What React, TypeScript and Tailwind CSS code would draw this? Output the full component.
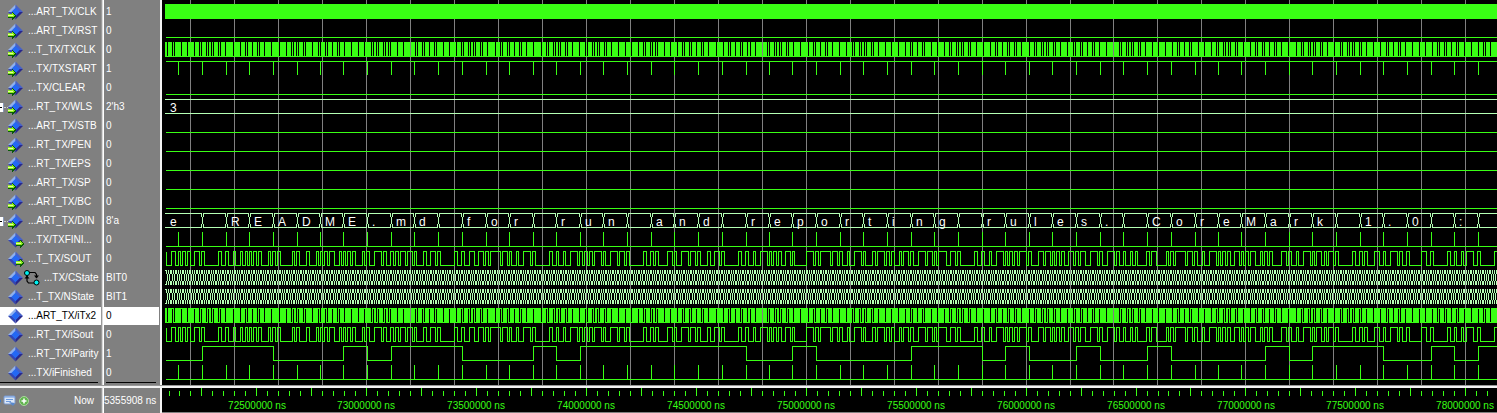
import React from "react";

type Kind = "in" | "out" | "internal";
interface Signal {
  name: string;
  value: string;
  kind: Kind;
  bus?: boolean;
  fsm?: boolean;
  selected?: boolean;
}

const signals: Signal[] = [
  { name: "...ART_TX/CLK", value: "1", kind: "in" },
  { name: "...ART_TX/RST", value: "0", kind: "in" },
  { name: "...T_TX/TXCLK", value: "0", kind: "in" },
  { name: "...TX/TXSTART", value: "1", kind: "in" },
  { name: "...TX/CLEAR", value: "0", kind: "in" },
  { name: "...RT_TX/WLS", value: "2'h3", kind: "in", bus: true },
  { name: "...ART_TX/STB", value: "0", kind: "in" },
  { name: "...RT_TX/PEN", value: "0", kind: "in" },
  { name: "...RT_TX/EPS", value: "0", kind: "in" },
  { name: "...ART_TX/SP", value: "0", kind: "in" },
  { name: "...ART_TX/BC", value: "0", kind: "in" },
  { name: "...ART_TX/DIN", value: "8'a", kind: "in", bus: true },
  { name: "...TX/TXFINI...", value: "0", kind: "out" },
  { name: "...T_TX/SOUT", value: "0", kind: "out" },
  { name: "...TX/CState", value: "BIT0", kind: "internal", fsm: true },
  { name: "...T_TX/NState", value: "BIT1", kind: "internal" },
  { name: "...ART_TX/iTx2", value: "0", kind: "internal", selected: true },
  { name: "...RT_TX/iSout", value: "0", kind: "internal" },
  { name: "...RT_TX/iParity", value: "1", kind: "internal" },
  { name: "...TX/iFinished", value: "0", kind: "internal" },
];

/* ---- waveform model: x is measured from the left edge of the wave pane ---- */
const ORIGIN = 162;
const END = 1497 - ORIGIN;
const START = 166 - ORIGIN;
const GREEN = "#39ff14";
const PALE = "#b4ffb4";
const BIT = 23.636 / 10;

// start of every transmitted frame
const marks = [
  178, 202, 226, 249, 273, 297, 320, 343, 367, 391, 414, 438, 462, 486, 509, 533, 556, 580, 603, 627, 651, 674, 698,
  722, 746, 769, 792, 816, 840, 863, 887, 911, 934, 958, 982, 1005, 1029, 1052, 1076, 1100, 1123, 1147, 1171, 1195,
  1218, 1241, 1265, 1289, 1312, 1336, 1360, 1383, 1407, 1431, 1454, 1478,
].map((x) => x - ORIGIN);

const chars = "e README.md for run and reporting rules.\nCoreMark 1.0 : ".split("");

// distances between the idle slots of the transmit clock
const idleSteps =
  "527675252325258752552578752325276252552577672325232767525255276752523252" +
  "58525255257852523252576252325257767525232767525255258752552535" +
  "752523252578525525" +
  "7762523252576775255276752523252677525525258525232525762525525776252325257" +
  "6775255276752523252675252552578525232525762523252577625525776752525526775" +
  "25";
const idle: number[] = [];
{
  let x = 167 - ORIGIN;
  idle.push(x);
  for (const d of idleSteps) {
    x += Number(d);
    if (x < END) idle.push(x);
  }
}

const top = (row: number) => 4 + 19 * row;
const low = (row: number) => 18 + 19 * row;

function flat(row: number, high = false) {
  return `M${START} ${(high ? top(row) : low(row)) + 0.5}H${END}`;
}

function pulses(row: number, down = false) {
  return flat(row, down) + marks.map((x) => `M${x + 0.5} ${top(row)}V${low(row) + (down ? 0 : 1)}`).join("");
}

function serial(row: number) {
  const hi = top(row) + 0.5;
  const lo = low(row) + 0.5;
  let level = 1;
  let d = `M${START + 0.5} ${hi}`;
  const go = (x: number, v: number) => {
    if (v === level || x < START) return;
    d += `H${Math.floor(x) + 0.5}V${v ? hi : lo}`;
    level = v;
  };
  const frame = (x0: number, ch: string) => {
    const code = ch.charCodeAt(0);
    go(x0 + BIT, 0);
    for (let b = 0; b < 8; b++) go(x0 + BIT * (b + 2), (code >> b) & 1);
    go(x0 + BIT * 10, 1);
  };
  go(START + 0.1, 0);
  frame(marks[0] - 23.4, "e");
  marks.forEach((x, i) => frame(x + 0.2, chars[i]));
  return d + `H${END}`;
}

function parity(row: number) {
  let d = `M${START} ${low(row) + 0.5}`;
  marks.forEach((x, i) => {
    let bits = 0;
    for (let c = chars[i].charCodeAt(0); c; c >>= 1) bits += c & 1;
    if (i > 0) d += `H${x + 0.5}V${(bits % 2 ? top(row) : low(row)) + 0.5}`;
  });
  return d + `H${END}`;
}

function busPath(row: number, edges: number[]) {
  const t = top(row);
  const b = low(row);
  let d = "";
  let x0 = START - 1;
  for (const e of [...edges, END + 2]) {
    d += `M${x0} ${t + 0.5}H${e}M${x0} ${b + 0.5}H${e}`;
    d += `M${e - 0.5} ${t}v4M${e + 1.5} ${t}v4M${e + 0.5} ${t + 4}v7M${e - 0.5} ${b - 3}v4M${e + 1.5} ${b - 3}v4`;
    x0 = e + 1;
  }
  return d;
}

function dense(row: number, alternate: boolean) {
  let d = "";
  let x0 = START - 1;
  [...idle, END].forEach((g, i) => {
    d += `M${x0} ${top(row)}H${g}v15H${x0}z`;
    d += `M${g} ${alternate && i % 2 ? top(row) : low(row)}h1v1h-1z`;
    x0 = g + 1;
  });
  return d;
}

const stateEdges: number[] = [];
for (let x = START + 1.6; x < END; x += BIT) stateEdges.push(Math.floor(x));

const gridPath = Array.from({ length: 30 }, (_, k) => `M${Math.floor(190.9 + 43.955 * k) - ORIGIN + 0.5} 0V385`).join("");

const lines =
  [1, 4, 6, 7, 8, 9, 10].map((r) => flat(r)).join("") +
  pulses(3, true) +
  pulses(12) +
  serial(13) +
  serial(17) +
  parity(18) +
  pulses(19);

const buses = `M${START - 1} ${top(5) + 0.5}H${END}M${START - 1} ${low(5) + 0.5}H${END}` + busPath(11, marks.slice(1));
const states = busPath(14, stateEdges) + busPath(15, stateEdges);

const ticks = Array.from({ length: 121 }, (_, k) => {
  const x = Math.floor(169 + 10.989 * k) - ORIGIN;
  return `M${x + 0.5} ${k % 5 === 3 ? 0 : 3}V8`;
}).join("");

function Waves() {
  return (
    <svg className="block h-[385px] w-full bg-black" shapeRendering="crispEdges" role="img" aria-label="Waveforms">
      <path d={gridPath} stroke="#808080" fill="none" />
      <rect x={START - 1} y={4} width={END} height={15} fill={GREEN} />
      <path d={dense(2, false) + dense(16, true)} fill={GREEN} />
      <path d={lines} stroke={GREEN} fill="none" />
      <path d={buses} stroke={PALE} fill="none" />
      <path d={states} stroke={PALE} fill="none" />
      <g fill="#fff" fontSize="12">
        <text x={START + 4} y={112}>3</text>
        <text x={START + 4} y={226}>e</text>
        {marks.map((x, i) =>
          i > 0 && chars[i].trim() ? (
            <text key={x} x={x + 5} y={226}>
              {chars[i]}
            </text>
          ) : null,
        )}
      </g>
    </svg>
  );
}

function Ruler() {
  return (
    <svg className="block h-[24px] w-full bg-black" role="img" aria-label="Time scale">
      <path d={ticks} stroke={GREEN} fill="none" shapeRendering="crispEdges" />
      <g fill={GREEN} fontSize="10" textAnchor="middle">
        {Array.from({ length: 12 }, (_, k) => (
          <text key={k} x={Math.round(256.5 + 109.89 * k) - ORIGIN} y={21}>
            {72500000 + 500000 * k} ns
          </text>
        ))}
      </g>
    </svg>
  );
}

function SignalIcon({ kind }: { kind: Kind }) {
  return (
    <svg className="block size-4 shrink-0" viewBox="0 0 16 16" aria-hidden="true">
      <path d="M7.5 0.5 0 8 4 8 7.5 4.5z" fill="#8fb0ee" />
      <path d="M7.5 0.5 15 8 11 8 7.5 4.5z" fill="#4660c8" />
      <path d="M0 8 7.5 15.5 7.5 11.5 4 8z" fill="#3446b4" />
      <path d="M15 8 7.5 15.5 7.5 11.5 11 8z" fill="#28288c" />
      <path d="M7.5 3.8 11.700 8 7.5 12.2 3.300 8z" fill="#2468f4" />
      {kind !== "internal" && (
        <g transform={kind === "in" ? "translate(0 8)" : "translate(8 8)"} shapeRendering="crispEdges">
          <path d="M0 2h4V0h1v1h1v1h1v1h1v2H7v1H6v1H5v1H4V6H0z" fill="#0a5a08" />
          <path d="M0 2h4V1h1v1h1v1h1v1H6v1H0z" fill="#8df01c" />
          <path d="M0 3h5v1H0z" fill="#eaff9a" />
        </g>
      )}
    </svg>
  );
}

function FsmIcon() {
  return (
    <svg className="block size-4 shrink-0" viewBox="0 0 16 16" aria-hidden="true">
      <path d="M5 2.5h6l1.5 2V8M3 5v6l1.5 2H10" fill="none" stroke="#000" strokeWidth="1.2" />
      <path d="M10 5.5h5L12.5 8.5zM.5 8.5h5L3 5.5z" fill="#000" />
      <circle cx="3" cy="3" r="2.5" fill="#00f0f0" stroke="#000" />
      <circle cx="12.5" cy="12.5" r="2.5" fill="#00f0f0" stroke="#000" />
    </svg>
  );
}

function Separator() {
  return <td className="border-r border-l border-l-[#999] border-r-white bg-[#d8d8d8] p-0" />;
}

export default function App() {
  return (
    <main className="flex flex-col bg-[#808080] font-['Liberation_Sans',Arial,sans-serif] text-[10px] leading-[18px] text-white">
      <div className="flex">
        <table className="w-[160px] shrink-0 table-fixed border-separate border-spacing-0 whitespace-nowrap">
          <colgroup>
            <col className="w-[101px]" />
            <col className="w-[3px]" />
            <col className="w-[56px]" />
          </colgroup>
          <tbody>
            <tr className="h-[3px]">
              <td className="p-0" />
              <Separator />
              <td className="p-0" />
            </tr>
            {signals.map((s, i) => (
              <tr key={s.name} className={i === signals.length - 1 ? "h-[18px]" : "h-[19px]"}>
                <td className="p-0 align-top">
                  <div className={"flex h-[18px] items-center " + (s.selected ? "bg-white text-black" : "")}>
                    <span className="flex w-[8px] shrink-0 items-center">
                      {s.bus && (
                        <button
                          aria-label={"Expand " + s.name}
                          className="flex h-[9px] w-[4px] items-center border-r border-[#8898b8] bg-white"
                        >
                          <span className="h-px w-[2px] bg-black" />
                        </button>
                      )}
                      {s.bus && <span className="h-px flex-1 border-t border-dotted border-[#ccc]" />}
                    </span>
                    <SignalIcon kind={s.kind} />
                    {s.fsm && <FsmIcon />}
                    <span className="ml-[4px]">{s.name}</span>
                  </div>
                </td>
                <Separator />
                <td className="p-0 align-top">
                  <div className={"mr-px h-[18px] pl-[2px] " + (s.selected ? "bg-white text-black" : "")}>{s.value}</div>
                </td>
              </tr>
            ))}
            <tr className="h-px">
              <td className="p-0 pr-[3px]">
                <div className="h-px bg-black" />
              </td>
              <Separator />
              <td className="p-0 pr-1 pl-[2px]">
                <div className="h-px bg-black" />
              </td>
            </tr>
            <tr className="h-[2px]">
              <td className="p-0" />
              <Separator />
              <td className="p-0" />
            </tr>
          </tbody>
        </table>
        <div className="w-[2px] shrink-0 bg-[#f4f4f4]" />
        <div className="min-w-0 flex-1 overflow-hidden">
          <Waves />
        </div>
      </div>

      <div className="h-[3px] border-t border-[#999] bg-[#f4f4f4]" />

      <div className="flex">
        <div className="flex w-[101px] shrink-0 items-center pr-[7px]">
          <svg className="block h-[14px] w-[30px]" viewBox="0 0 30 14" aria-hidden="true">
            <path d="M0 5l1 2-1 2z" fill="#2a78d8" />
            <rect x="4" y="2" width="11" height="8" rx="1" fill="#dce8f8" stroke="#7898cc" />
            <path d="M4 3h11M6 5.5h7M6 7.5h5" stroke="#6c9ae0" />
            <path d="M9 8l4 4 2-3z" fill="#5888cc" />
            <circle cx="24" cy="7" r="4.5" fill="#62b450" stroke="#a8d89c" />
            <path d="M24 4.5v5M21.5 7h5" stroke="#fff" strokeWidth="1.6" />
          </svg>
          <span className="ml-auto">Now</span>
        </div>
        <div className="w-[3px] shrink-0 border-r border-l border-l-[#999] border-r-white bg-[#d8d8d8]" />
        <div className="flex w-[56px] shrink-0 items-center whitespace-nowrap">5355908 ns</div>
        <div className="w-[2px] shrink-0 bg-[#f4f4f4]" />
        <div className="min-w-0 flex-1 overflow-hidden border-b border-[#808080] bg-black">
          <Ruler />
        </div>
      </div>
    </main>
  );
}
